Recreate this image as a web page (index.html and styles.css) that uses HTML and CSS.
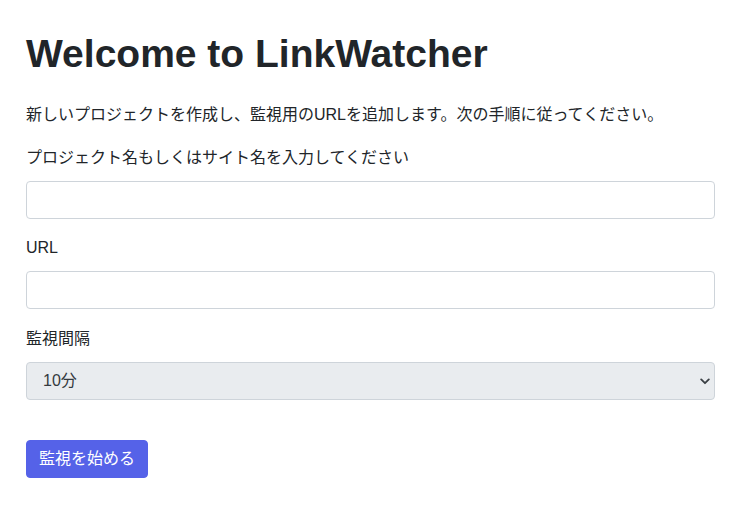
FILE: index.html
```html
<!DOCTYPE html>
<html lang="ja">
<head>
<meta charset="utf-8">
<title>LinkWatcher</title>
<link rel="stylesheet" href="styles.css">
</head>
<body>
<main class="container">
  <h1 class="title">Welcome to LinkWatcher</h1>
  <p class="lead">新しいプロジェクトを作成し、監視用のURLを追加します。次の手順に従ってください。</p>
  <form class="form">
    <div class="group">
      <label class="label" for="name">プロジェクト名もしくはサイト名を入力してください</label>
      <input class="control" id="name" type="text">
    </div>
    <div class="group">
      <label class="label" for="url">URL</label>
      <input class="control" id="url" type="text">
    </div>
    <div class="group group-last">
      <label class="label" for="interval">監視間隔</label>
      <div class="select-wrap">
        <select class="control select" id="interval" disabled>
          <option>10分</option>
        </select>
        <svg class="chevron" width="10" height="7" viewBox="0 0 10 7" aria-hidden="true"><path d="M1.2 1.4 L5 5.2 L8.8 1.4" fill="none" stroke="#3a3f44" stroke-width="1.8" stroke-linecap="round" stroke-linejoin="round"/></svg>
      </div>
    </div>
    <button class="btn" type="button">監視を始める</button>
  </form>
</main>
</body>
</html>
```
FILE: styles.css
```css
html, body {
  margin: 0;
  padding: 0;
  background: #fff;
}
body {
  font-family: "Liberation Sans", "Noto Sans CJK JP", sans-serif;
  color: #212529;
  font-size: 16px;
  line-height: 1.5;
}
.container {
  padding: 31px 18px 20px 26px;
}
.title {
  margin: 0 0 25px;
  font-size: 39px;
  font-weight: 700;
  line-height: 1.2;
  letter-spacing: 0;
}
.lead {
  margin: 0 0 19px;
  line-height: 24px;
}
.form {
  display: flex;
  flex-direction: column;
}
.group {
  display: flex;
  flex-direction: column;
  margin-bottom: 17.5px;
}
.group-last {
  margin-bottom: 40px;
}
.label {
  line-height: 24px;
  margin-bottom: 11px;
}
.control {
  box-sizing: border-box;
  height: 38px;
  width: 100%;
  border: 1px solid #ced4da;
  border-radius: 4px;
  background: #fff;
  font: inherit;
  color: #212529;
  padding: 6px 12px;
  margin: 0;
}
.select-wrap {
  position: relative;
}
.select {
  appearance: none;
  -webkit-appearance: none;
  background: #e9ecef;
  padding-left: 16px;
  color: #343a40;
  opacity: 1;
}
.chevron {
  position: absolute;
  right: 5px;
  top: 16px;
}
.btn {
  align-self: flex-start;
  box-sizing: border-box;
  height: 38px;
  padding: 6px 12px;
  border: 1px solid #5562e8;
  border-radius: 4px;
  background: #5562e8;
  color: #fff;
  font: inherit;
  line-height: 24px;
}
```
